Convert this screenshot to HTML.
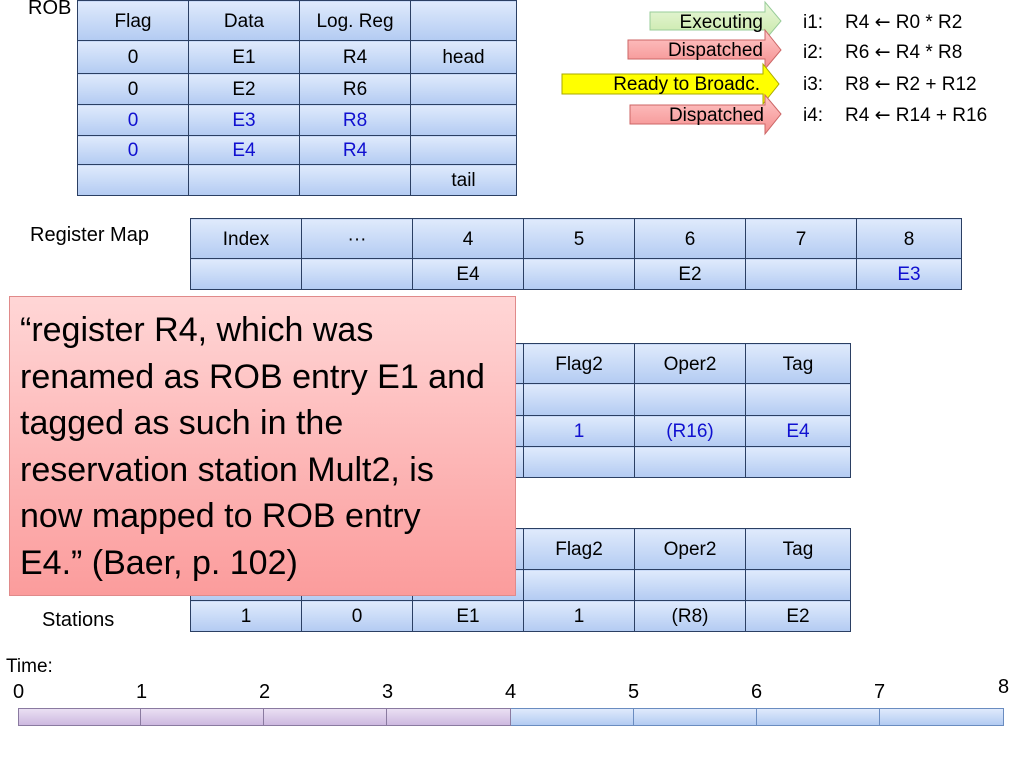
<!DOCTYPE html><html><head><style>
body{margin:0;width:1024px;height:768px;position:relative;overflow:hidden;background:#fff;font-family:"Liberation Sans",sans-serif;color:#000}
.t{position:absolute;border-collapse:collapse;font-size:19px}
.t td{border:1.5px solid #2b3f63;background:linear-gradient(#dfeafc,#b3cbf2);text-align:center;padding:2px 0 0 0}
.b{color:#1010d0}
.l{position:absolute;font-size:20px;white-space:nowrap}
</style></head><body>
<div class="l" style="left:28px;top:-3px">ROB</div>
<table class="t" style="left:77px;top:0;width:440px">
<tr style="height:40px"><td style="width:110px">Flag</td><td style="width:110px">Data</td><td style="width:110px">Log. Reg</td><td></td></tr>
<tr style="height:33px"><td>0</td><td>E1</td><td>R4</td><td>head</td></tr>
<tr style="height:31px"><td>0</td><td>E2</td><td>R6</td><td></td></tr>
<tr style="height:31px" class="b"><td>0</td><td>E3</td><td>R8</td><td></td></tr>
<tr style="height:29px" class="b"><td>0</td><td>E4</td><td>R4</td><td></td></tr>
<tr style="height:31px"><td></td><td></td><td></td><td>tail</td></tr>
</table>
<svg style="position:absolute;left:0;top:0" width="1024" height="140">
<defs>
<linearGradient id="g" x1="0" x2="0" y1="0" y2="1"><stop offset="0" stop-color="#eaf7dc"/><stop offset="1" stop-color="#c7e8a6"/></linearGradient>
<linearGradient id="p" x1="0" x2="0" y1="0" y2="1"><stop offset="0" stop-color="#ffc8c8"/><stop offset="1" stop-color="#f48e8e"/></linearGradient>
</defs>
<polygon points="650,12 765,12 765,2 781,21 765,40 765,30 650,30" fill="url(#g)" stroke="#9c9" />
<polygon points="628,40 765,40 765,30 781,50 765,69 765,59 628,59" fill="url(#p)" stroke="#c66"/>
<polygon points="562,74 763,74 763,64 779,84 763,104 763,94 562,94" fill="#ffff00" stroke="#aa0"/>
<polygon points="630,105 765,105 765,95 781,114 765,134 765,124 630,124" fill="url(#p)" stroke="#c66"/>
<g font-size="19" font-family="Liberation Sans" text-anchor="end">
<text x="763" y="28">Executing</text><text x="763" y="56">Dispatched</text><text x="760" y="90">Ready to Broadc.</text><text x="764" y="121">Dispatched</text></g>
<g font-size="19" font-family="Liberation Sans">
<text x="803" y="28">i1:</text><text x="845" y="28">R4 <tspan font-family="DejaVu Sans">←</tspan> R0 * R2</text>
<text x="803" y="58">i2:</text><text x="845" y="58">R6 <tspan font-family="DejaVu Sans">←</tspan> R4 * R8</text>
<text x="803" y="90">i3:</text><text x="845" y="90">R8 <tspan font-family="DejaVu Sans">←</tspan> R2 + R12</text>
<text x="803" y="121">i4:</text><text x="845" y="121">R4 <tspan font-family="DejaVu Sans">←</tspan> R14 + R16</text></g>
</svg>
<div class="l" style="left:30px;top:224px">Register Map</div>
<table class="t" style="left:190px;top:218px;width:772px">
<tr style="height:40px"><td style="width:110px">Index</td><td style="width:110px">···</td><td style="width:110px">4</td><td style="width:110px">5</td><td style="width:110px">6</td><td style="width:110px">7</td><td>8</td></tr>
<tr style="height:31px"><td></td><td></td><td>E4</td><td></td><td>E2</td><td></td><td class="b">E3</td></tr>
</table>
<table class="t" style="left:190px;top:343px;width:661px">
<tr style="height:40px"><td style="width:110px"></td><td style="width:110px"></td><td style="width:110px"></td><td style="width:110px">Flag2</td><td style="width:110px">Oper2</td><td>Tag</td></tr>
<tr style="height:32px"><td></td><td></td><td></td><td></td><td></td><td></td></tr>
<tr style="height:31px" class="b"><td></td><td></td><td></td><td>1</td><td>(R16)</td><td>E4</td></tr>
<tr style="height:31px"><td></td><td></td><td></td><td></td><td></td><td></td></tr>
</table>
<table class="t" style="left:190px;top:528px;width:661px">
<tr style="height:41px"><td style="width:110px"></td><td style="width:110px"></td><td style="width:110px"></td><td style="width:110px">Flag2</td><td style="width:110px">Oper2</td><td>Tag</td></tr>
<tr style="height:31px"><td></td><td></td><td></td><td></td><td></td><td></td></tr>
<tr style="height:31px"><td>1</td><td>0</td><td>E1</td><td>1</td><td>(R8)</td><td>E2</td></tr>
</table>
<div class="l" style="left:42px;top:609px">Stations</div>
<div style="position:absolute;left:9px;top:296px;width:507px;height:300px;background:linear-gradient(#ffd6d6,#fb9c9c);border:1px solid #e08a8a;box-sizing:border-box;padding:10px 0 0 10px;font-size:34px;line-height:46.5px;white-space:nowrap;overflow:hidden">“register R4, which was<br>renamed as ROB entry E1 and<br>tagged as such in the<br>reservation station Mult2, is<br>now mapped to ROB entry<br>E4.” (Baer, p. 102)</div>
<div class="l" style="left:6px;top:656px;font-size:19px">Time:</div>
<div class="l" style="left:13px;top:681px">0</div><div class="l" style="left:136px;top:681px">1</div><div class="l" style="left:259px;top:681px">2</div><div class="l" style="left:382px;top:681px">3</div><div class="l" style="left:505px;top:681px">4</div><div class="l" style="left:628px;top:681px">5</div><div class="l" style="left:751px;top:681px">6</div><div class="l" style="left:874px;top:681px">7</div><div class="l" style="left:998px;top:676px">8</div>
<div style="position:absolute;left:18px;top:708px;display:flex;height:18px">
<div style="width:123px;border:1px solid #8a7aa0;background:linear-gradient(#eadff3,#cdb9e0);box-sizing:border-box"></div>
<div style="width:123px;border:1px solid #8a7aa0;border-left:none;background:linear-gradient(#eadff3,#cdb9e0);box-sizing:border-box"></div>
<div style="width:123px;border:1px solid #8a7aa0;border-left:none;background:linear-gradient(#eadff3,#cdb9e0);box-sizing:border-box"></div>
<div style="width:124px;border:1px solid #8a7aa0;border-left:none;background:linear-gradient(#eadff3,#cdb9e0);box-sizing:border-box"></div>
<div style="width:123px;border:1px solid #6a8cc0;border-left:none;background:linear-gradient(#dfeafc,#b3cbf2);box-sizing:border-box"></div>
<div style="width:123px;border:1px solid #6a8cc0;border-left:none;background:linear-gradient(#dfeafc,#b3cbf2);box-sizing:border-box"></div>
<div style="width:123px;border:1px solid #6a8cc0;border-left:none;background:linear-gradient(#dfeafc,#b3cbf2);box-sizing:border-box"></div>
<div style="width:124px;border:1px solid #6a8cc0;border-left:none;background:linear-gradient(#dfeafc,#b3cbf2);box-sizing:border-box"></div>
</div>
</body></html>
